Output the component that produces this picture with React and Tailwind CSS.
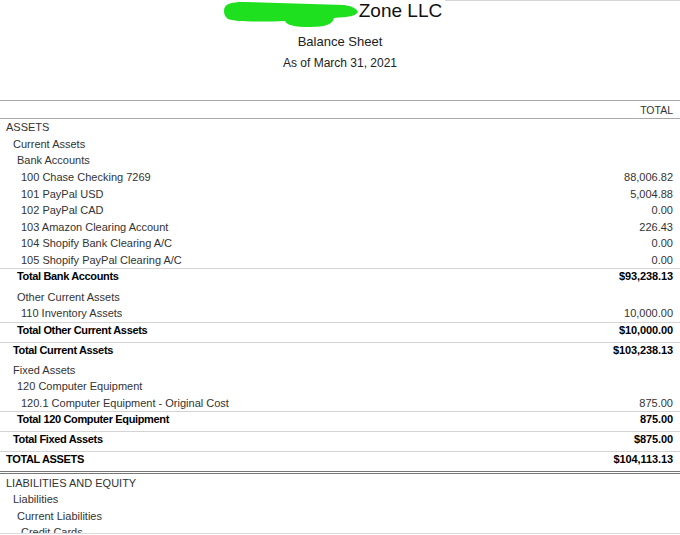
const rows = [
    { label: 'ASSETS', level: 0 },
    { label: 'Current Assets', level: 1 },
    { label: 'Bank Accounts', level: 2 },
    { label: '100 Chase Checking 7269', level: 3, amount: '88,006.82' },
    { label: '101 PayPal USD', level: 3, amount: '5,004.88' },
    { label: '102 PayPal CAD', level: 3, amount: '0.00' },
    { label: '103 Amazon Clearing Account', level: 3, amount: '226.43' },
    { label: '104 Shopify Bank Clearing A/C', level: 3, amount: '0.00' },
    { label: '105 Shopify PayPal Clearing A/C', level: 3, amount: '0.00' },
    { label: 'Total Bank Accounts', level: 2, amount: '$93,238.13', total: true },
    { label: 'Other Current Assets', level: 2 },
    { label: '110 Inventory Assets', level: 3, amount: '10,000.00' },
    { label: 'Total Other Current Assets', level: 2, amount: '$10,000.00', total: true },
    { label: 'Total Current Assets', level: 1, amount: '$103,238.13', total: true },
    { label: 'Fixed Assets', level: 1 },
    { label: '120 Computer Equipment', level: 2 },
    { label: '120.1 Computer Equipment - Original Cost', level: 3, amount: '875.00' },
    { label: 'Total 120 Computer Equipment', level: 2, amount: '875.00', total: true },
    { label: 'Total Fixed Assets', level: 1, amount: '$875.00', total: true },
    { label: 'TOTAL ASSETS', level: 0, amount: '$104,113.13', total: true, grand: true },
    { label: 'LIABILITIES AND EQUITY', level: 0 },
    { label: 'Liabilities', level: 1 },
    { label: 'Current Liabilities', level: 2 },
    { label: 'Credit Cards', level: 3 },
];

const indent = ['pl-[6px]', 'pl-[13px]', 'pl-[17px]', 'pl-[21px]'];

function Row({ row }) {
    if (row.total) {
        return (
            <div
                className={`flex h-[20px] items-start justify-between border-t border-[#d4d4d4] pr-[7px] text-[11px] font-bold leading-[15px] text-black ${indent[row.level]} ${row.grand ? 'h-[23px] border-b-[3px] border-double border-b-[#777]' : ''}`}
            >
                <span className="tracking-[-0.35px]">{row.label}</span>
                <span className="tracking-[-0.1px]">{row.amount}</span>
            </div>
        );
    }
    return (
        <div
            className={`flex h-[16.6px] items-center justify-between pr-[7px] text-[11px] leading-[16px] text-[#333] ${indent[row.level]}`}
        >
            <span>{row.label}</span>
            {row.amount && <span>{row.amount}</span>}
        </div>
    );
}

export default function App() {
    return (
        <div className="flex h-[535px] w-[680px] flex-col bg-white font-['Liberation_Sans',Arial,sans-serif]">
            <div className="flex-1 overflow-hidden">
                {/* top edge */}
                <div className="flex h-px">
                    <div className="w-[445px]" />
                    <div className="flex-1 bg-[#d6d6d6]" />
                </div>

                {/* report header */}
                <div className="flex h-[23px] items-start justify-center">
                    <svg width="135" height="28" viewBox="0 0 135 28" className="-ml-[14px] -mt-[1px] shrink-0">
                        <path
                            d="M0 11 C0 4 6 2 20 2 L120 5 C128 6 133 9 134 12 C132 16 124 17 110 18 C109 24 102 27 86 27 C70 27 63 25 61 21 C40 22 10 22 4 19 C1 17 0 14 0 11 Z"
                            fill="#1fe01f"
                        />
                    </svg>
                    <span className="-mt-[1px] text-[19px] leading-[22px] text-[#111]">Zone LLC</span>
                </div>
                <div className="mt-[10px] text-center text-[13px] leading-[16px] text-[#222]">Balance Sheet</div>
                <div className="mt-[5px] text-center text-[12px] leading-[16px] text-[#222]">As of March 31, 2021</div>

                {/* column header */}
                <div className="mt-[29px] flex h-[19px] items-center justify-end border-y border-[#a8a8a8] pr-[7px] text-[10.5px] leading-[16px] text-[#333]">
                    TOTAL
                </div>

                {/* rows */}
                <div className="flex flex-col">
                    {rows.map((row, index) => (
                        <Row key={index} row={row} />
                    ))}
                </div>
            </div>
            <div className="h-px bg-[#dcdcdc]" />
            <div className="h-px bg-white" />
        </div>
    );
}
